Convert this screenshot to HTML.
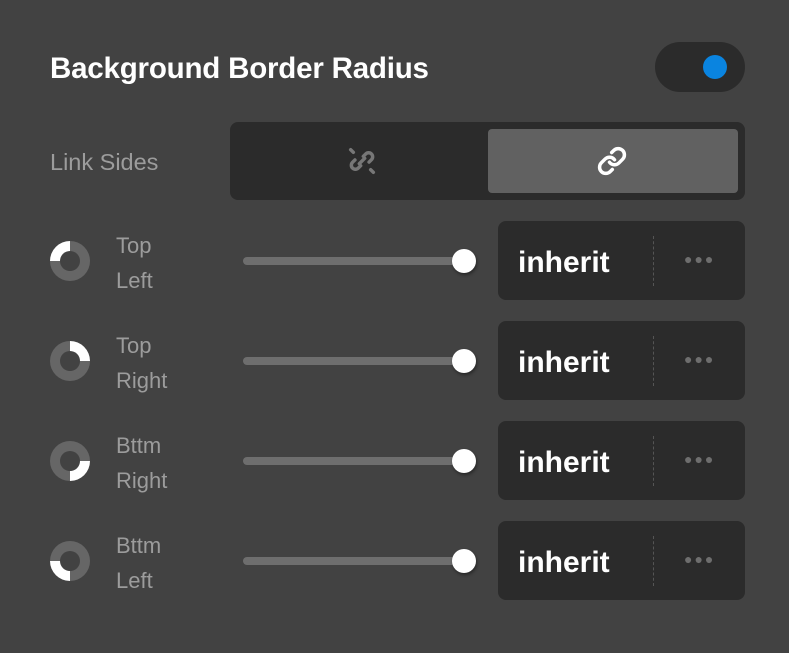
<!DOCTYPE html><html><head><style>
body{margin:0;width:789px;height:653px;background:#424242;font-family:"Liberation Sans",sans-serif;position:relative;overflow:hidden}
.a{position:absolute}
.t{left:50px;top:52px;font-size:29.5px;font-weight:bold;color:#fff;letter-spacing:-0.2px}
.lbl{color:#9c9c9c;font-size:22px;line-height:35px}
.box{background:#2b2b2b;border-radius:8px}
.track{left:243px;width:222px;height:8px;background:#6e6e6e;border-radius:4px}
.knob{left:452px;width:24px;height:24px;border-radius:50%;background:#fff;box-shadow:1px 2px 3px rgba(0,0,0,.4)}
.inh{left:518px;color:#fff;font-weight:bold;font-size:30px}
.div{left:653px;width:0;height:50px;border-left:1px dashed #555}
.dots{left:684px;color:#6e6e6e;font-size:14px;letter-spacing:2px}
.donut{left:50px;width:40px;height:40px;border-radius:50%}
.donut::after{content:"";position:absolute;left:10px;top:10px;width:20px;height:20px;border-radius:50%;background:#424242}
</style></head><body>
<div class="a t">Background Border Radius</div>
<div class="a box" style="left:655px;top:42px;width:90px;height:50px;border-radius:25px"></div>
<div class="a" style="left:703px;top:55px;width:24px;height:24px;border-radius:50%;background:#0a84e0"></div>
<div class="a lbl" style="left:50px;top:145px;font-size:23.5px">Link Sides</div>
<div class="a box" style="left:230px;top:122px;width:515px;height:78px"></div>
<div class="a" style="left:488px;top:129px;width:250px;height:64px;background:#616161;border-radius:4px"></div>
<svg class="a" style="left:346px;top:145px" width="32" height="32" viewBox="0 0 24 24" fill="none" stroke="#777" stroke-width="2.6" stroke-linecap="round"><path d="M13 8.5l1.8-1.8a3 3 0 0 1 4.3 4.3l-1.8 1.8M11 15.5l-1.8 1.8a3 3 0 0 1-4.3-4.3l1.8-1.8M10 14l4-4M3.5 3.5l2 2M18.5 18.5l2 2"/></svg>
<svg class="a" style="left:597px;top:146px" width="30" height="30" viewBox="0 0 24 24" fill="none" stroke="#fff" stroke-width="2.8" stroke-linecap="round"><path d="M10 13a5 5 0 0 0 7.54.54l3-3a5 5 0 0 0-7.07-7.07l-1.72 1.71M14 11a5 5 0 0 0-7.54-.54l-3 3a5 5 0 0 0 7.07 7.07l1.71-1.71"/></svg>

<div class="a donut" style="top:241px;background:conic-gradient(#666 0 270deg,#fff 270deg 360deg)"></div>
<div class="a lbl" style="left:116px;top:228px">Top<br>Left</div>
<div class="a track" style="top:257px"></div>
<div class="a knob" style="top:249px"></div>
<div class="a box" style="left:498px;top:221px;width:247px;height:79px"></div>
<div class="a inh" style="top:246px">inherit</div>
<div class="a div" style="top:236px"></div>
<div class="a dots" style="top:251px">●●●</div>

<div class="a donut" style="top:341px;background:conic-gradient(#fff 0 90deg,#666 90deg 360deg)"></div>
<div class="a lbl" style="left:116px;top:328px">Top<br>Right</div>
<div class="a track" style="top:357px"></div>
<div class="a knob" style="top:349px"></div>
<div class="a box" style="left:498px;top:321px;width:247px;height:79px"></div>
<div class="a inh" style="top:346px">inherit</div>
<div class="a div" style="top:336px"></div>
<div class="a dots" style="top:351px">●●●</div>

<div class="a donut" style="top:441px;background:conic-gradient(#666 0 90deg,#fff 90deg 180deg,#666 180deg 360deg)"></div>
<div class="a lbl" style="left:116px;top:428px">Bttm<br>Right</div>
<div class="a track" style="top:457px"></div>
<div class="a knob" style="top:449px"></div>
<div class="a box" style="left:498px;top:421px;width:247px;height:79px"></div>
<div class="a inh" style="top:446px">inherit</div>
<div class="a div" style="top:436px"></div>
<div class="a dots" style="top:451px">●●●</div>

<div class="a donut" style="top:541px;background:conic-gradient(#666 0 180deg,#fff 180deg 270deg,#666 270deg 360deg)"></div>
<div class="a lbl" style="left:116px;top:528px">Bttm<br>Left</div>
<div class="a track" style="top:557px"></div>
<div class="a knob" style="top:549px"></div>
<div class="a box" style="left:498px;top:521px;width:247px;height:79px"></div>
<div class="a inh" style="top:546px">inherit</div>
<div class="a div" style="top:536px"></div>
<div class="a dots" style="top:551px">●●●</div>
</body></html>
